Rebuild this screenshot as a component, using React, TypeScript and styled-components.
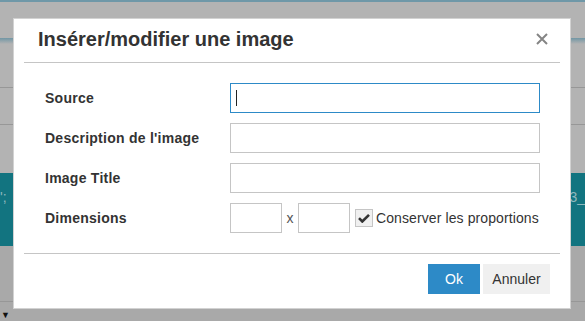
import React from "react";
import styled, { createGlobalStyle } from "styled-components";

const Global = createGlobalStyle`
  html, body { margin: 0; padding: 0; }
  body { font-family: "Liberation Sans", Arial, sans-serif; background: #b3b3b3; overflow: hidden; }
`;

const Page = styled.div`
  position: relative;
  width: 585px;
  height: 321px;
  display: flex;
  flex-direction: column;
  background: #b3b3b3;
  overflow: hidden;
`;

const TopLine = styled.div`
  height: 2px;
  background: #6f98a8;
`;

const Band = styled.div<{ $h: number; $bg?: string; $border?: boolean }>`
  height: ${(p) => p.$h}px;
  flex: none;
  background: ${(p) => p.$bg || "#b3b3b3"};
  border-bottom: ${(p) => (p.$border ? "1px solid #979797" : "none")};
  box-sizing: border-box;
  position: relative;
`;

const Toolbar = styled.div`
  height: 6px;
  background: linear-gradient(#7196a4, #b3b3b3);
`;

const Teal = styled.div`
  height: 74px;
  background: #127480;
  display: flex;
  justify-content: space-between;
  align-items: flex-start;
  padding-top: 16px;
  box-sizing: border-box;
  color: #8fb8bd;
  font-size: 14px;
`;

const TealText = styled.span`
  font-family: "Liberation Sans", Arial, sans-serif;
`;

const Arrow = styled.div`
  padding-left: 1px;
  font-size: 9px;
  line-height: 10px;
  color: #111;
  margin-top: 8px;
`;

const Dialog = styled.div`
  position: absolute;
  left: 13px;
  top: 18px;
  width: 558px;
  height: 291px;
  box-sizing: border-box;
  background: #fff;
  border: 1px solid #d2d2d2;
  display: flex;
  flex-direction: column;
`;

const Header = styled.div`
  margin: 0 10px;
  height: 44px;
  box-sizing: border-box;
  border-bottom: 1px solid #c5c5c5;
  display: flex;
  align-items: center;
  justify-content: space-between;
  padding: 0 12px 3px 14px;
`;

const Title = styled.h1`
  margin: 0;
  font-size: 20px;
  font-weight: bold;
  color: #333;
  font-family: "Liberation Sans", Arial, sans-serif;
`;

const Close = styled.button`
  border: 0;
  background: none;
  padding: 0;
  width: 12px;
  height: 12px;
  display: flex;
  cursor: pointer;
`;

const Body = styled.div`
  margin: 0 10px;
  padding: 20px 20px 20px 21px;
  border-bottom: 1px solid #c5c5c5;
  display: flex;
  flex-direction: column;
  gap: 10px;
`;

const Row = styled.div`
  display: flex;
  align-items: center;
  height: 30px;
`;

const Label = styled.label`
  width: 185px;
  font-size: 14px;
  font-weight: bold;
  color: #333;
  letter-spacing: 0.25px;
`;

const Input = styled.div<{ $focus?: boolean; $w?: number }>`
  width: ${(p) => p.$w ?? 310}px;
  height: 30px;
  box-sizing: border-box;
  border: 1px solid ${(p) => (p.$focus ? "#2d8ac7" : "#c5c5c5")};
  background: #fff;
  display: flex;
  align-items: center;
  padding-left: 5px;
`;

const Caret = styled.span`
  width: 1px;
  height: 16px;
  background: #222;
`;

const Times = styled.span`
  font-size: 14px;
  color: #555;
  width: 16px;
  text-align: center;
`;

const Check = styled.span`
  width: 18px;
  height: 18px;
  box-sizing: border-box;
  border: 1px solid #c5c5c5;
  background: #f0f0f0;
  display: flex;
  align-items: center;
  justify-content: center;
  margin: 0 3px 0 5px;
`;

const CheckLabel = styled.span`
  font-size: 14px;
  color: #333;
  letter-spacing: 0.1px;
`;

const Footer = styled.div`
  display: flex;
  justify-content: flex-end;
  gap: 3px;
  padding: 10px 20px 0 0;
`;

const Btn = styled.button<{ $primary?: boolean }>`
  height: 30px;
  border: 0;
  padding: 0;
  font-family: "Liberation Sans", Arial, sans-serif;
  font-size: 14px;
  background: ${(p) => (p.$primary ? "#2d8ac7" : "#f0f0f0")};
  color: ${(p) => (p.$primary ? "#fff" : "#333")};
  width: ${(p) => (p.$primary ? 52 : 67)}px;
`;

export default function App() {
  return (
    <>
      <Global />
      <Page>
        <TopLine />
        <Band $h={36} />
        <Toolbar />
        <Band $h={44} $border />
        <Band $h={37} $border />
        <Band $h={48} />
        <Teal>
          <TealText>';</TealText>
          <TealText>3_</TealText>
        </Teal>
        <Band $h={56} $bg="#a9a9a9" $border />
        <Band $h={19} $bg="#a9a9a9">
          <Arrow>▼</Arrow>
        </Band>

        <Dialog>
          <Header>
            <Title>Insérer/modifier une image</Title>
            <Close aria-label="Fermer">
              <svg width="12" height="12" viewBox="0 0 12 12">
                <path d="M1 1 L11 11 M11 1 L1 11" stroke="#858585" strokeWidth="2" />
              </svg>
            </Close>
          </Header>
          <Body>
            <Row>
              <Label>Source</Label>
              <Input $focus>
                <Caret />
              </Input>
            </Row>
            <Row>
              <Label>Description de l'image</Label>
              <Input />
            </Row>
            <Row>
              <Label>Image Title</Label>
              <Input />
            </Row>
            <Row>
              <Label>Dimensions</Label>
              <Input $w={52} />
              <Times>x</Times>
              <Input $w={52} />
              <Check>
                <svg width="12" height="10" viewBox="0 0 12 10">
                  <path d="M1 5.2 L4.3 8.5 L11 1.8" stroke="#333" strokeWidth="2.6" fill="none" />
                </svg>
              </Check>
              <CheckLabel>Conserver les proportions</CheckLabel>
            </Row>
          </Body>
          <Footer>
            <Btn $primary>Ok</Btn>
            <Btn>Annuler</Btn>
          </Footer>
        </Dialog>
      </Page>
    </>
  );
}
